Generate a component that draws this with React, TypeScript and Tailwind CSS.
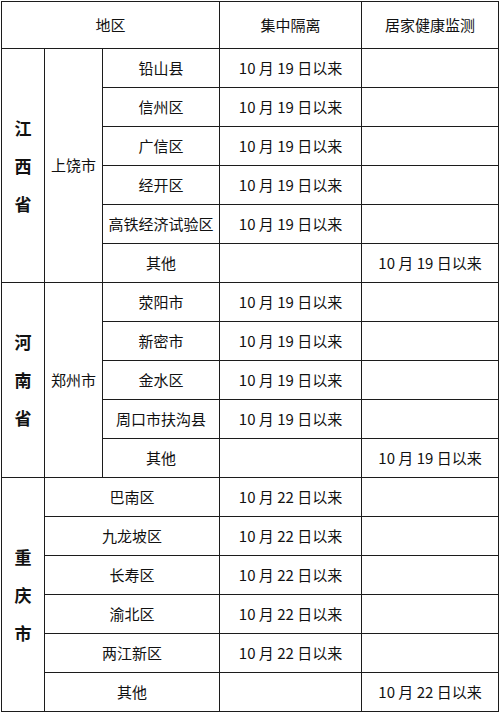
const font = { fontFamily: '"Noto Sans CJK SC", "Noto Sans", sans-serif' }

type Row = { district: string; jizhong: string; jujia: string }

const Province = ({ name }: { name: string }) => (
  <div className="flex flex-col items-center text-[17px] font-bold leading-[38px] text-[#111]">
    {name.split("").map((c, i) => (
      <span key={i}>{c}</span>
    ))}
  </div>
)

const cell = "border border-[#1c1c1c] text-center align-middle text-[15px] text-[#111] font-normal p-0"

const jiangxi: Row[] = [
  { district: "铅山县", jizhong: "10 月 19 日以来", jujia: "" },
  { district: "信州区", jizhong: "10 月 19 日以来", jujia: "" },
  { district: "广信区", jizhong: "10 月 19 日以来", jujia: "" },
  { district: "经开区", jizhong: "10 月 19 日以来", jujia: "" },
  { district: "高铁经济试验区", jizhong: "10 月 19 日以来", jujia: "" },
  { district: "其他", jizhong: "", jujia: "10 月 19 日以来" },
]

const henan: Row[] = [
  { district: "荥阳市", jizhong: "10 月 19 日以来", jujia: "" },
  { district: "新密市", jizhong: "10 月 19 日以来", jujia: "" },
  { district: "金水区", jizhong: "10 月 19 日以来", jujia: "" },
  { district: "周口市扶沟县", jizhong: "10 月 19 日以来", jujia: "" },
  { district: "其他", jizhong: "", jujia: "10 月 19 日以来" },
]

const chongqing: Row[] = [
  { district: "巴南区", jizhong: "10 月 22 日以来", jujia: "" },
  { district: "九龙坡区", jizhong: "10 月 22 日以来", jujia: "" },
  { district: "长寿区", jizhong: "10 月 22 日以来", jujia: "" },
  { district: "渝北区", jizhong: "10 月 22 日以来", jujia: "" },
  { district: "两江新区", jizhong: "10 月 22 日以来", jujia: "" },
  { district: "其他", jizhong: "", jujia: "10 月 22 日以来" },
]

export default function App() {
  return (
    <div className="w-[500px] h-[713px] bg-white pt-[1px] pl-[1px]" style={font}>
      <table className="table-fixed border-collapse w-[497px]">
        <colgroup>
          <col className="w-[43px]" />
          <col className="w-[58px]" />
          <col className="w-[117px]" />
          <col className="w-[142px]" />
          <col className="w-[137px]" />
        </colgroup>
        <thead>
          <tr className="h-[47px]">
            <th colSpan={3} className={cell}>地区</th>
            <th className={cell}>集中隔离</th>
            <th className={cell}>居家健康监测</th>
          </tr>
        </thead>
        <tbody>
          {jiangxi.map((r, i) => (
            <tr key={r.district} className="h-[39px]">
              {i === 0 && (
                <>
                  <td rowSpan={6} className={cell}>
                    <Province name="江西省" />
                  </td>
                  <td rowSpan={6} className={cell}>上饶市</td>
                </>
              )}
              <td className={cell}>{r.district}</td>
              <td className={cell}>{r.jizhong}</td>
              <td className={cell}>{r.jujia}</td>
            </tr>
          ))}
          {henan.map((r, i) => (
            <tr key={r.district} className="h-[39px]">
              {i === 0 && (
                <>
                  <td rowSpan={5} className={cell}>
                    <Province name="河南省" />
                  </td>
                  <td rowSpan={5} className={cell}>郑州市</td>
                </>
              )}
              <td className={cell}>{r.district}</td>
              <td className={cell}>{r.jizhong}</td>
              <td className={cell}>{r.jujia}</td>
            </tr>
          ))}
          {chongqing.map((r, i) => (
            <tr key={r.district} className="h-[39px]">
              {i === 0 && (
                <td rowSpan={6} className={cell}>
                  <Province name="重庆市" />
                </td>
              )}
              <td colSpan={2} className={cell}>{r.district}</td>
              <td className={cell}>{r.jizhong}</td>
              <td className={cell}>{r.jujia}</td>
            </tr>
          ))}
        </tbody>
      </table>
    </div>
  )
}
